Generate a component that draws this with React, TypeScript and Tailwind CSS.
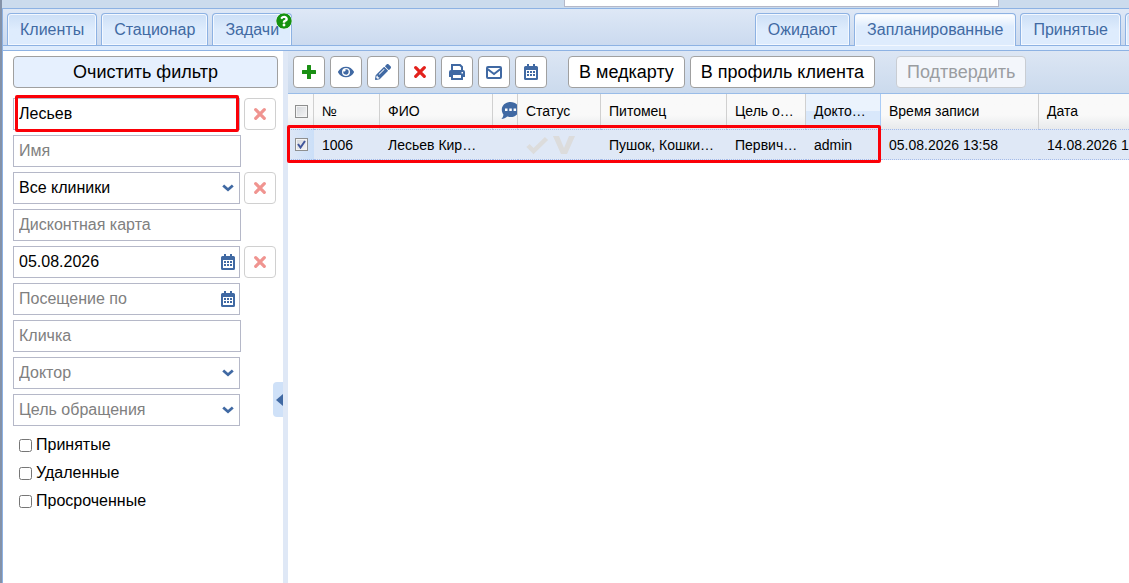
import React from "react";
import { FaEye, FaPencilAlt, FaQuestionCircle } from "react-icons/fa";

const PlusIcon = () => (
  <svg viewBox="0 0 14 14" className="h-[14px] w-[14px]" fill="#1a8f13">
    <path d="M5.500 0h3a.5.5 0 0 1 .5.5V5h4.500a.5.5 0 0 1 .5.5v3a.5.5 0 0 1-.5.5H9v4.500a.5.5 0 0 1-.5.5h-3a.5.5 0 0 1-.5-.5V9H.5a.5.5 0 0 1-.5-.5v-3A.5.5 0 0 1 .5 5H5V.5a.5.5 0 0 1 .5-.5Z" />
  </svg>
);

const PrintIcon = () => (
  <svg viewBox="0 0 16 16" className="h-4 w-4" fill="none">
    <path d="M3 7V1h8l2 2v4" stroke="currentColor" strokeWidth="2" />
    <path
      fillRule="evenodd"
      clipRule="evenodd"
      d="M2 6h12a2 2 0 0 1 2 2v4.500a.5.5 0 0 1-.5.5H14v2.500a.5.5 0 0 1-.5.5h-11a.5.5 0 0 1-.5-.5V13H.5a.5.5 0 0 1-.5-.5V8a2 2 0 0 1 2-2Zm2 5v3h8v-3H4Zm8.500-3v1.500H14V8h-1.500Z"
      fill="currentColor"
    />
  </svg>
);

const CalendarIcon = () => (
  <svg viewBox="0 0 14 16" className="h-4 w-[14px]" fill="currentColor">
    <path
      fillRule="evenodd"
      clipRule="evenodd"
      d="M3 0h2v2h4V0h2v2h1.500A1.500 1.500 0 0 1 14 3.500v11a1.500 1.500 0 0 1-1.500 1.500h-11A1.500 1.500 0 0 1 0 14.500v-11A1.500 1.500 0 0 1 1.500 2H3V0ZM2 6v8h10V6H2Z"
    />
    <path d="M3 7h2v2H3zM6 7h2v2H6zM9 7h2v2H9zM3 10h2v2H3zM6 10h2v2H6zM9 10h2v2H9z" />
  </svg>
);

const EnvelopeIcon = () => (
  <svg viewBox="0 0 16 14" className="h-[14px] w-4" fill="none" stroke="currentColor" strokeWidth="2">
    <rect x="1" y="2" width="14" height="11" rx="1" />
    <path d="m1.500 4 6.500 5 6.500-5" />
  </svg>
);

const CrossIcon = () => (
  <svg viewBox="0 0 12 12" className="h-3 w-3" stroke="currentColor" strokeWidth="3.200" strokeLinecap="round">
    <path d="m1.700 1.700 8.600 8.600M10.300 1.700l-8.600 8.600" />
  </svg>
);

const ChevronIcon = () => (
  <svg viewBox="0 0 12 8" className="h-2 w-3" fill="none" stroke="currentColor" strokeWidth="2.800">
    <path d="m1.200 1.500 4.800 4.200 4.800-4.200" />
  </svg>
);

const CommentIcon = () => (
  <svg viewBox="0 0 18 18" className="h-[18px] w-[18px]">
    <path
      fill="#4069a3"
      d="M9.500 0C14.500 0 18 3.400 18 7.500S14.500 15 9.500 15c-1.200 0-2.300-.2-3.300-.5C4.600 16 2.700 17 .4 17c1.200-1.200 1.900-2.700 2-4.400C1.400 11.200.8 9.500.8 7.500.8 3.400 4.500 0 9.500 0Z"
    />
    <path fill="#fff" d="M4 6.500h2.500V9H4zM8.300 6.500h2.500V9H8.300zM12.600 6.500h2.500V9h-2.500z" />
  </svg>
);

const StatusMarks = () => (
  <svg viewBox="0 0 50 20" className="h-5 w-[50px]" fill="none">
    <path d="m2 10.500 5.500 5.500L20.500 3.500" stroke="#dcdcdc" strokeWidth="4.500" />
    <path d="M27 1h6l5 12 5-12h6l-8 18h-6L27 1Z" fill="#dcdcdc" />
  </svg>
);

const Tab = ({ label, active, help }: { label: string; active?: boolean; help?: boolean }) => (
  <button
    className={`relative shrink-0 rounded-t border border-b-0 border-[#8db2e3] px-3 text-base text-[#416aa3] inset-shadow-[0_0_0_1px_#f3f8ff] ${
      active
        ? "-mb-px h-[33px] bg-linear-to-b from-white to-[#deecfd] to-40%"
        : "h-8 bg-linear-to-b from-[#ccdff6] to-[#deecfd] to-50%"
    }`}
  >
    {label}
    {help && (
      <FaQuestionCircle className="absolute -top-px -right-px h-4 w-4 rounded-full bg-white text-[#15920f]" />
    )}
  </button>
);

const ToolButton = ({ title, children }: { title: string; children: React.ReactNode }) => (
  <button
    aria-label={title}
    className="flex h-8 w-8 items-center justify-center rounded border border-[#a0a0a0] bg-white text-[#4069a3]"
  >
    {children}
  </button>
);

const TextButton = ({ label, disabled }: { label: string; disabled?: boolean }) => (
  <button
    disabled={disabled}
    className={`h-8 shrink-0 rounded border px-[10px] text-lg leading-none ${
      disabled ? "border-[#c9cdd3] bg-[#f3f6fb] text-[#9a9da1]" : "border-[#a0a0a0] bg-white text-black"
    }`}
  >
    {label}
  </button>
);

type Field = {
  label: string;
  value?: string;
  kind: "text" | "select" | "date";
  clearable?: boolean;
  marked?: boolean;
};

const fields: Field[] = [
  { label: "Фамилия", value: "Лесьев", kind: "text", clearable: true, marked: true },
  { label: "Имя", kind: "text" },
  { label: "Клиника", value: "Все клиники", kind: "select", clearable: true },
  { label: "Дисконтная карта", kind: "text" },
  { label: "Посещение с", value: "05.08.2026", kind: "date", clearable: true },
  { label: "Посещение по", kind: "date" },
  { label: "Кличка", kind: "text" },
  { label: "Доктор", kind: "select" },
  { label: "Цель обращения", kind: "select" },
];

const fieldClass =
  "block h-8 w-full appearance-none border border-[#b5b8c8] bg-white px-[5px] pb-px text-base outline-none placeholder:text-[#808080]";

const FilterField = ({ label, value, kind, clearable, marked }: Field) => (
  <div className="flex gap-1">
    <div className={`relative text-[#4069a3] ${kind === "text" ? "w-[228px]" : "w-[227px]"}`}>
      {kind === "select" ? (
        <select aria-label={label} className={`${fieldClass} ${value ? "text-black" : "text-[#808080]"}`}>
          <option>{value ?? label}</option>
        </select>
      ) : (
        <input
          aria-label={label}
          placeholder={label}
          defaultValue={value}
          className={`${fieldClass} text-black`}
        />
      )}
      {kind === "select" && (
        <span className="pointer-events-none absolute top-3 right-[6px]">
          <ChevronIcon />
        </span>
      )}
      {kind === "date" && (
        <button aria-label="Календарь" className="absolute top-2 right-[5px]">
          <CalendarIcon />
        </button>
      )}
      {marked && (
        <div className="pointer-events-none absolute -top-[3px] right-px -bottom-[2px] left-[2px] rounded-xs border-3 border-[#fb0007]" />
      )}
    </div>
    {clearable && (
      <button
        aria-label="Очистить"
        className="ml-auto flex h-8 w-8 items-center justify-center rounded border border-[#d0d0d0] bg-white text-[#f09490]"
      >
        <CrossIcon />
      </button>
    )}
  </div>
);

const Sidebar = () => (
  <aside className="relative w-[280px] shrink-0 bg-white py-[5px] pr-[5px] pl-[10px]">
    <button className="h-8 w-full rounded border border-[#a0a0a0] bg-[#e6f0fe] text-lg leading-none text-black">
      Очистить фильтр
    </button>
    <div className="mt-[10px] mr-[2px] flex flex-col gap-[5px]">
      {fields.map((field) => (
        <FilterField key={field.label} {...field} />
      ))}
    </div>
    <div className="mt-[5px] ml-[6px] flex flex-col">
      {["Принятые", "Удаленные", "Просроченные"].map((name) => (
        <label key={name} className="flex h-7 items-center gap-1 text-base text-black">
          <input type="checkbox" className="mt-px h-[13px] w-[13px]" />
          {name}
        </label>
      ))}
    </div>
    <button
      aria-label="Свернуть"
      className="absolute top-[331px] right-0 flex h-[35px] w-[10px] items-center justify-end rounded-l bg-[#cfe1f8]"
    >
      <svg viewBox="0 0 7 12" className="h-3 w-[7px]">
        <path d="M7 0v12L0 6z" fill="#4069a3" />
      </svg>
    </button>
  </aside>
);

const columns = [
  { title: "№", value: "1006", width: "w-[66px]" },
  { title: "ФИО", value: "Лесьев Кир…", width: "w-[113px]" },
  { title: <CommentIcon />, value: "", width: "w-[25px]" },
  { title: "Статус", value: <StatusMarks />, width: "w-[83px]" },
  { title: "Питомец", value: "Пушок, Кошки…", width: "w-[126px]" },
  { title: "Цель о…", value: "Первич…", width: "w-[79px]" },
  { title: "Докто…", value: "admin", width: "w-[75px]", sorted: true },
  { title: "Время записи", value: "05.08.2026 13:58", width: "w-[158px]" },
  { title: "Дата", value: "14.08.2026 1", width: "w-[130px]" },
];

const GridCheckbox = ({ label, checked }: { label: string; checked?: boolean }) => (
  <span className="relative block h-[13px] w-[13px]">
    <input
      type="checkbox"
      aria-label={label}
      defaultChecked={checked}
      className="block h-[13px] w-[13px] appearance-none border border-[#8e8f8f] bg-linear-to-br from-[#d3d6db] to-[#f6f6f6] inset-shadow-[0_0_0_1px_#f4f4f4]"
    />
    {checked && (
      <svg viewBox="0 0 13 13" className="pointer-events-none absolute inset-0" fill="none">
        <path d="m3 6 2.500 3.500L10 3" stroke="#40569b" strokeWidth="2" />
      </svg>
    )}
  </span>
);

const AppointmentGrid = () => (
  <div className="overflow-x-clip">
    <table className="w-[881px] min-w-full table-fixed border-separate border-spacing-0 text-left text-sm text-black">
      <thead>
        <tr className="h-[35px] bg-linear-to-b from-[#f9f9f9] from-60% to-[#e8eaec]">
          <th className="w-[26px] border-r border-[#d0d0d0] pl-[7px]">
            <GridCheckbox label="Выбрать все" />
          </th>
          {columns.map((col, i) => (
            <th
              key={i}
              className={`overflow-hidden border-r pb-[2px] pl-2 font-normal whitespace-nowrap ${col.width} ${
                col.sorted
                  ? "border-[#aaccf6] bg-linear-to-b from-[#ebf3fd] from-50% to-[#d9e8fb] to-50%"
                  : "border-[#d0d0d0]"
              }`}
            >
              {col.title}
            </th>
          ))}
        </tr>
      </thead>
      <tbody>
        <tr className="h-[31px] bg-[#dfe8f6]">
          <td className="border-y border-dotted border-[#a3bae9] bg-linear-to-r from-[#dfe8f6] to-[#cbdff8] pl-[7px]">
            <GridCheckbox label="Выбрать запись" checked />
          </td>
          {columns.map((col, i) => (
            <td key={i} className="overflow-hidden border-y border-dotted border-[#a3bae9] pl-2 whitespace-nowrap">
              {col.value}
            </td>
          ))}
        </tr>
      </tbody>
    </table>
  </div>
);

export default function App() {
  return (
    <div className="flex min-h-screen flex-col overflow-hidden border-l-2 border-[#8492a8] bg-white font-['Liberation_Sans',Arial,sans-serif]">
      <header className="flex h-2 justify-center bg-[#cbdbed]">
        <div className="-mr-[432px] h-[7px] w-[435px] border border-t-0 border-[#b5b8c8] bg-white" />
      </header>
      <div className="flex grow flex-col border-t border-l border-[#8db2e3]">
        <nav className="flex h-[37px] items-end overflow-x-clip border-b border-[#8db2e3] bg-linear-to-b from-[#dee8f6] to-[#cbdaef] pl-1">
          <div className="flex items-end gap-1">
            <Tab label="Клиенты" />
            <Tab label="Стационар" />
            <Tab label="Задачи" help />
          </div>
          <div className="-mr-[22px] ml-auto flex items-end gap-1">
            <Tab label="Ожидают" />
            <Tab label="Запланированные" active />
            <Tab label="Принятые" />
            <Tab label="" />
          </div>
        </nav>
        <div className="h-[5px] border-b border-[#8db2e3] bg-[#deecfd]" />
        <div className="flex grow">
          <Sidebar />
          <div className="w-[5px] shrink-0 bg-[#dfe8f6]" />
          <main className="relative min-w-0 grow bg-white">
            <div className="flex h-[43px] items-center gap-[5px] border-b border-[#99bce8] bg-linear-to-b from-[#dce6f4] to-[#cbdaed] px-[5px]">
              <ToolButton title="Добавить">
                <PlusIcon />
              </ToolButton>
              <ToolButton title="Просмотр">
                <FaEye className="h-4 w-4" />
              </ToolButton>
              <ToolButton title="Редактировать">
                <FaPencilAlt className="h-4 w-4" />
              </ToolButton>
              <ToolButton title="Удалить">
                <span className="text-[#e3211c]">
                  <CrossIcon />
                </span>
              </ToolButton>
              <ToolButton title="Печать">
                <PrintIcon />
              </ToolButton>
              <ToolButton title="Письмо">
                <EnvelopeIcon />
              </ToolButton>
              <ToolButton title="Календарь">
                <CalendarIcon />
              </ToolButton>
              <div className="ml-4 flex gap-[5px]">
                <TextButton label="В медкарту" />
                <TextButton label="В профиль клиента" />
              </div>
              <div className="ml-4">
                <TextButton label="Подтвердить" disabled />
              </div>
            </div>
            <AppointmentGrid />
            <div className="pointer-events-none absolute top-[74px] -left-px h-[38px] w-[594px] rounded-xs border-3 border-[#fb0007]" />
          </main>
        </div>
      </div>
    </div>
  );
}
